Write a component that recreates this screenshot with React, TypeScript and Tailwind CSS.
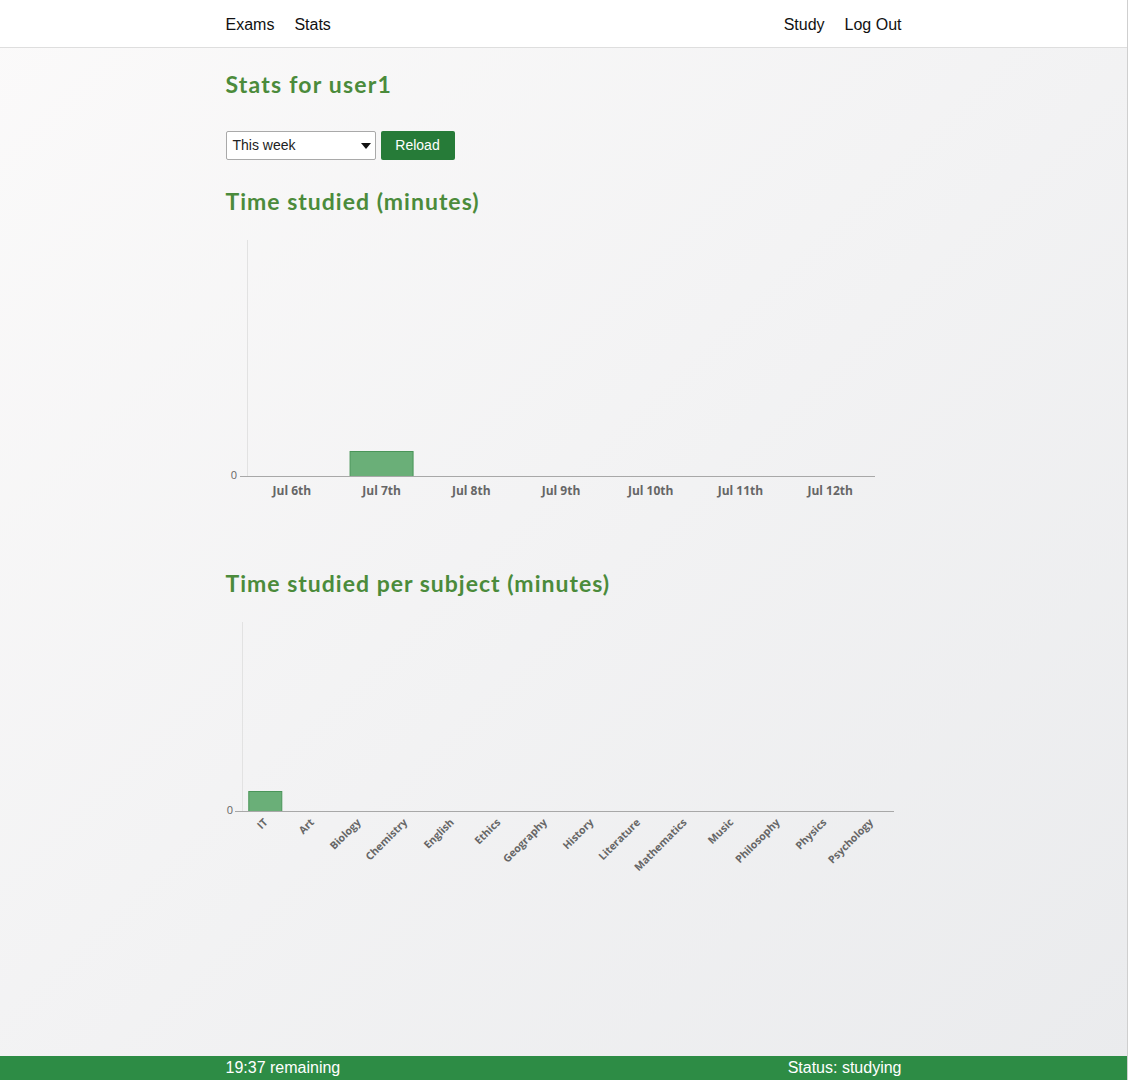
import React from "react";

const days = ["Jul 6th", "Jul 7th", "Jul 8th", "Jul 9th", "Jul 10th", "Jul 11th", "Jul 12th"];
const dayValues = [0, 1, 0, 0, 0, 0, 0];

const subjects = [
  "IT",
  "Art",
  "Biology",
  "Chemistry",
  "English",
  "Ethics",
  "Geography",
  "History",
  "Literature",
  "Mathematics",
  "Music",
  "Philosophy",
  "Physics",
  "Psychology",
];
const subjectValues = [1, 0, 0, 0, 0, 0, 0, 0, 0, 0, 0, 0, 0, 0];

const DailyChart = () => {
  const left = 21;
  const right = 649;
  const top = 10;
  const base = 246;
  const step = (right - left) / days.length;
  return (
    <svg width="676" height="300" className="block">
      <line x1={left + 0.5} y1={top} x2={left + 0.5} y2={base} stroke="#e2e2e2" />
      {dayValues.map((v, i) =>
        v > 0 ? (
          <rect
            key={i}
            x={left + step * i + (step - 64) / 2 + 0.5}
            y={base - 25 + 0.5}
            width={63}
            height={25}
            fill="#6aaf78"
            stroke="#4a9559"
          />
        ) : null
      )}
      <line x1={left} y1={base + 0.5} x2={right} y2={base + 0.5} stroke="#a8a8a8" />
      <line x1={left - 7} y1={base + 0.5} x2={left} y2={base + 0.5} stroke="#a8a8a8" />
      <text x={11} y={base + 3} fontSize="11" fill="#666" fontFamily="'Open Sans', sans-serif" textAnchor="end">
        0
      </text>
      {days.map((d, i) => (
        <text
          key={d}
          x={left + step * i + step / 2}
          y={base + 19}
          fontSize="12"
          fontWeight="700"
          fill="#666"
          fontFamily="'Open Sans', sans-serif"
          textAnchor="middle"
        >
          {d}
        </text>
      ))}
    </svg>
  );
};

const SubjectChart = () => {
  const left = 16;
  const right = 668;
  const top = 10;
  const base = 199;
  const step = (right - left) / subjects.length;
  return (
    <svg width="676" height="270" className="block">
      <line x1={left + 0.5} y1={top} x2={left + 0.5} y2={base} stroke="#e2e2e2" />
      {subjectValues.map((v, i) =>
        v > 0 ? (
          <rect
            key={i}
            x={left + step * i + (step - 34) / 2 + 0.5}
            y={base - 20 + 0.5}
            width={33}
            height={20}
            fill="#6aaf78"
            stroke="#4a9559"
          />
        ) : null
      )}
      <line x1={left} y1={base + 0.5} x2={right} y2={base + 0.5} stroke="#a8a8a8" />
      <line x1={left - 7} y1={base + 0.5} x2={left} y2={base + 0.5} stroke="#a8a8a8" />
      <text x={7} y={base + 3} fontSize="11" fill="#666" fontFamily="'Open Sans', sans-serif" textAnchor="end">
        0
      </text>
      {subjects.map((s, i) => {
        const x = left + step * i + step / 2 + 3;
        const y = base + 12;
        return (
          <text
            key={s}
            x={x}
            y={y}
            fontSize="10.5"
            fontWeight="700"
            fill="#666"
            fontFamily="'Open Sans', sans-serif"
            textAnchor="end"
            transform={`rotate(-45 ${x} ${y})`}
          >
            {s}
          </text>
        );
      })}
    </svg>
  );
};

export default function App() {
  return (
    <div className="min-h-screen flex flex-col border-r border-[#cfcfcf] bg-gradient-to-br from-[#fbfafa] to-[#eaebed] font-['Liberation_Sans',Arial,sans-serif]">
      <nav className="h-[48px] bg-white border-b border-[#dedede]">
        <div className="w-[676px] mx-auto h-full flex items-center justify-between pt-[2px] text-[16px] text-[#111]">
          <div className="flex gap-[20px]">
            <span>Exams</span>
            <span>Stats</span>
          </div>
          <div className="flex gap-[20px]">
            <span>Study</span>
            <span>Log Out</span>
          </div>
        </div>
      </nav>

      <main className="flex-1">
        <div className="w-[676px] mx-auto">
          <h1 className="mt-[21px] text-[23px] leading-[30px] tracking-[1.2px] font-bold text-[#4b8b3b] font-['Lato',sans-serif]">
            Stats for user1
          </h1>

          <div className="mt-[32px] flex items-center gap-[5px]">
            <div className="w-[150px] h-[29px] bg-white border border-[#a9a9a9] rounded-[2px] flex items-center justify-between pl-[6px] pr-[4px] text-[14px] text-[#222]">
              <span>This week</span>
              <svg width="10" height="6" viewBox="0 0 10 6">
                <path d="M0 0 L10 0 L5 6 Z" fill="#111" />
              </svg>
            </div>
            <button className="w-[74px] h-[29px] bg-[#267b38] text-white text-[14px] rounded-[2px]">
              Reload
            </button>
          </div>

          <h2 className="mt-[26px] text-[23px] leading-[30px] tracking-[1px] font-bold text-[#4b8b3b] font-['Lato',sans-serif]">
            Time studied (minutes)
          </h2>
          <div className="mt-[14px]">
            <DailyChart />
          </div>

          <h2 className="mt-[38px] text-[23px] leading-[30px] tracking-[1px] font-bold text-[#4b8b3b] font-['Lato',sans-serif]">
            Time studied per subject (minutes)
          </h2>
          <div className="mt-[14px]">
            <SubjectChart />
          </div>
        </div>
      </main>

      <footer className="h-[24px] bg-[#2d8c45]">
        <div className="w-[676px] mx-auto h-full flex items-center justify-between text-[16px] text-white">
          <span>19:37 remaining</span>
          <span>Status: studying</span>
        </div>
      </footer>
    </div>
  );
}
